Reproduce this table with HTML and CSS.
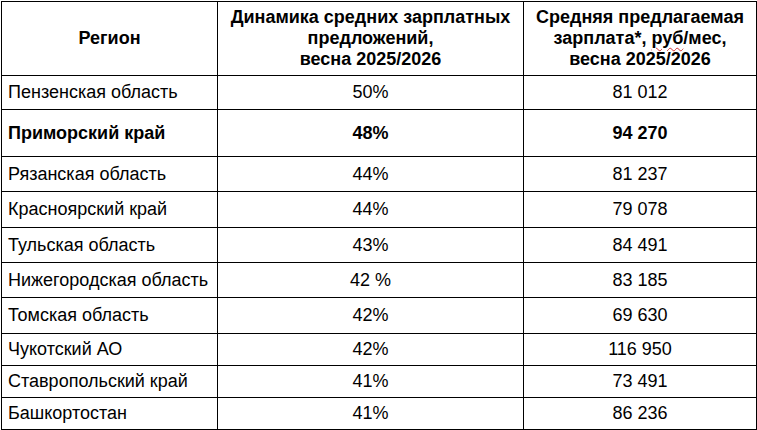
FILE: index.html
```html
<!DOCTYPE html>
<html lang="ru">
<head>
<meta charset="utf-8">
<link rel="stylesheet" href="styles.css">
</head>
<body>
<table class="tbl">
  <colgroup>
    <col class="c1"><col class="c2"><col class="c3">
  </colgroup>
  <thead>
    <tr class="head">
      <th>Регион</th>
      <th>Динамика средних зарплатных предложений,<br>весна 2025/2026</th>
      <th>Средняя предлагаемая зарплата*, <span class="spell">руб</span>/мес,<br>весна 2025/2026</th>
    </tr>
  </thead>
  <tbody>
    <tr class="r34"><td class="name">Пензенская область</td><td>50%</td><td>81 012</td></tr>
    <tr class="r47 bold"><td class="name">Приморский край</td><td>48%</td><td>94 270</td></tr>
    <tr class="r35"><td class="name">Рязанская область</td><td>44%</td><td>81 237</td></tr>
    <tr class="r36"><td class="name">Красноярский край</td><td>44%</td><td>79 078</td></tr>
    <tr class="r35"><td class="name">Тульская область</td><td>43%</td><td>84 491</td></tr>
    <tr class="r35"><td class="name">Нижегородская область</td><td>42 %</td><td>83 185</td></tr>
    <tr class="r36"><td class="name">Томская область</td><td>42%</td><td>69 630</td></tr>
    <tr class="r32"><td class="name">Чукотский АО</td><td>42%</td><td>116 950</td></tr>
    <tr class="r32"><td class="name">Ставропольский край</td><td>41%</td><td>73 491</td></tr>
    <tr class="r32"><td class="name">Башкортостан</td><td>41%</td><td>86 236</td></tr>
  </tbody>
</table>
</body>
</html>
```
FILE: styles.css
```css
html, body {
  margin: 0;
  padding: 0;
  background: #fff;
}
body {
  padding: 1px 0 0 1px;
  font-family: "Liberation Sans", Arial, sans-serif;
  font-size: 18px;
  color: #000;
}
.tbl {
  border-collapse: collapse;
  table-layout: fixed;
  width: 755px;
}
.c1 { width: 216px; }
.c2 { width: 306px; }
.c3 { width: 233px; }
.tbl th, .tbl td {
  border: 1px solid #000;
  padding: 0 6px;
  text-align: center;
  vertical-align: middle;
  line-height: 21px;
}
.tbl th {
  font-weight: bold;
  line-height: 21px;
  padding: 0 4px;
}
.tbl td.name { text-align: left; }
.head { height: 74px; }
.r32 { height: 32px; }
.r34 { height: 34px; }
.r35 { height: 35px; }
.r36 { height: 36px; }
.r47 { height: 47px; }
.bold td { font-weight: bold; }
.spell {
  text-decoration: underline wavy #d03030;
  text-decoration-thickness: 1px;
  text-underline-offset: 3px;
}
```
